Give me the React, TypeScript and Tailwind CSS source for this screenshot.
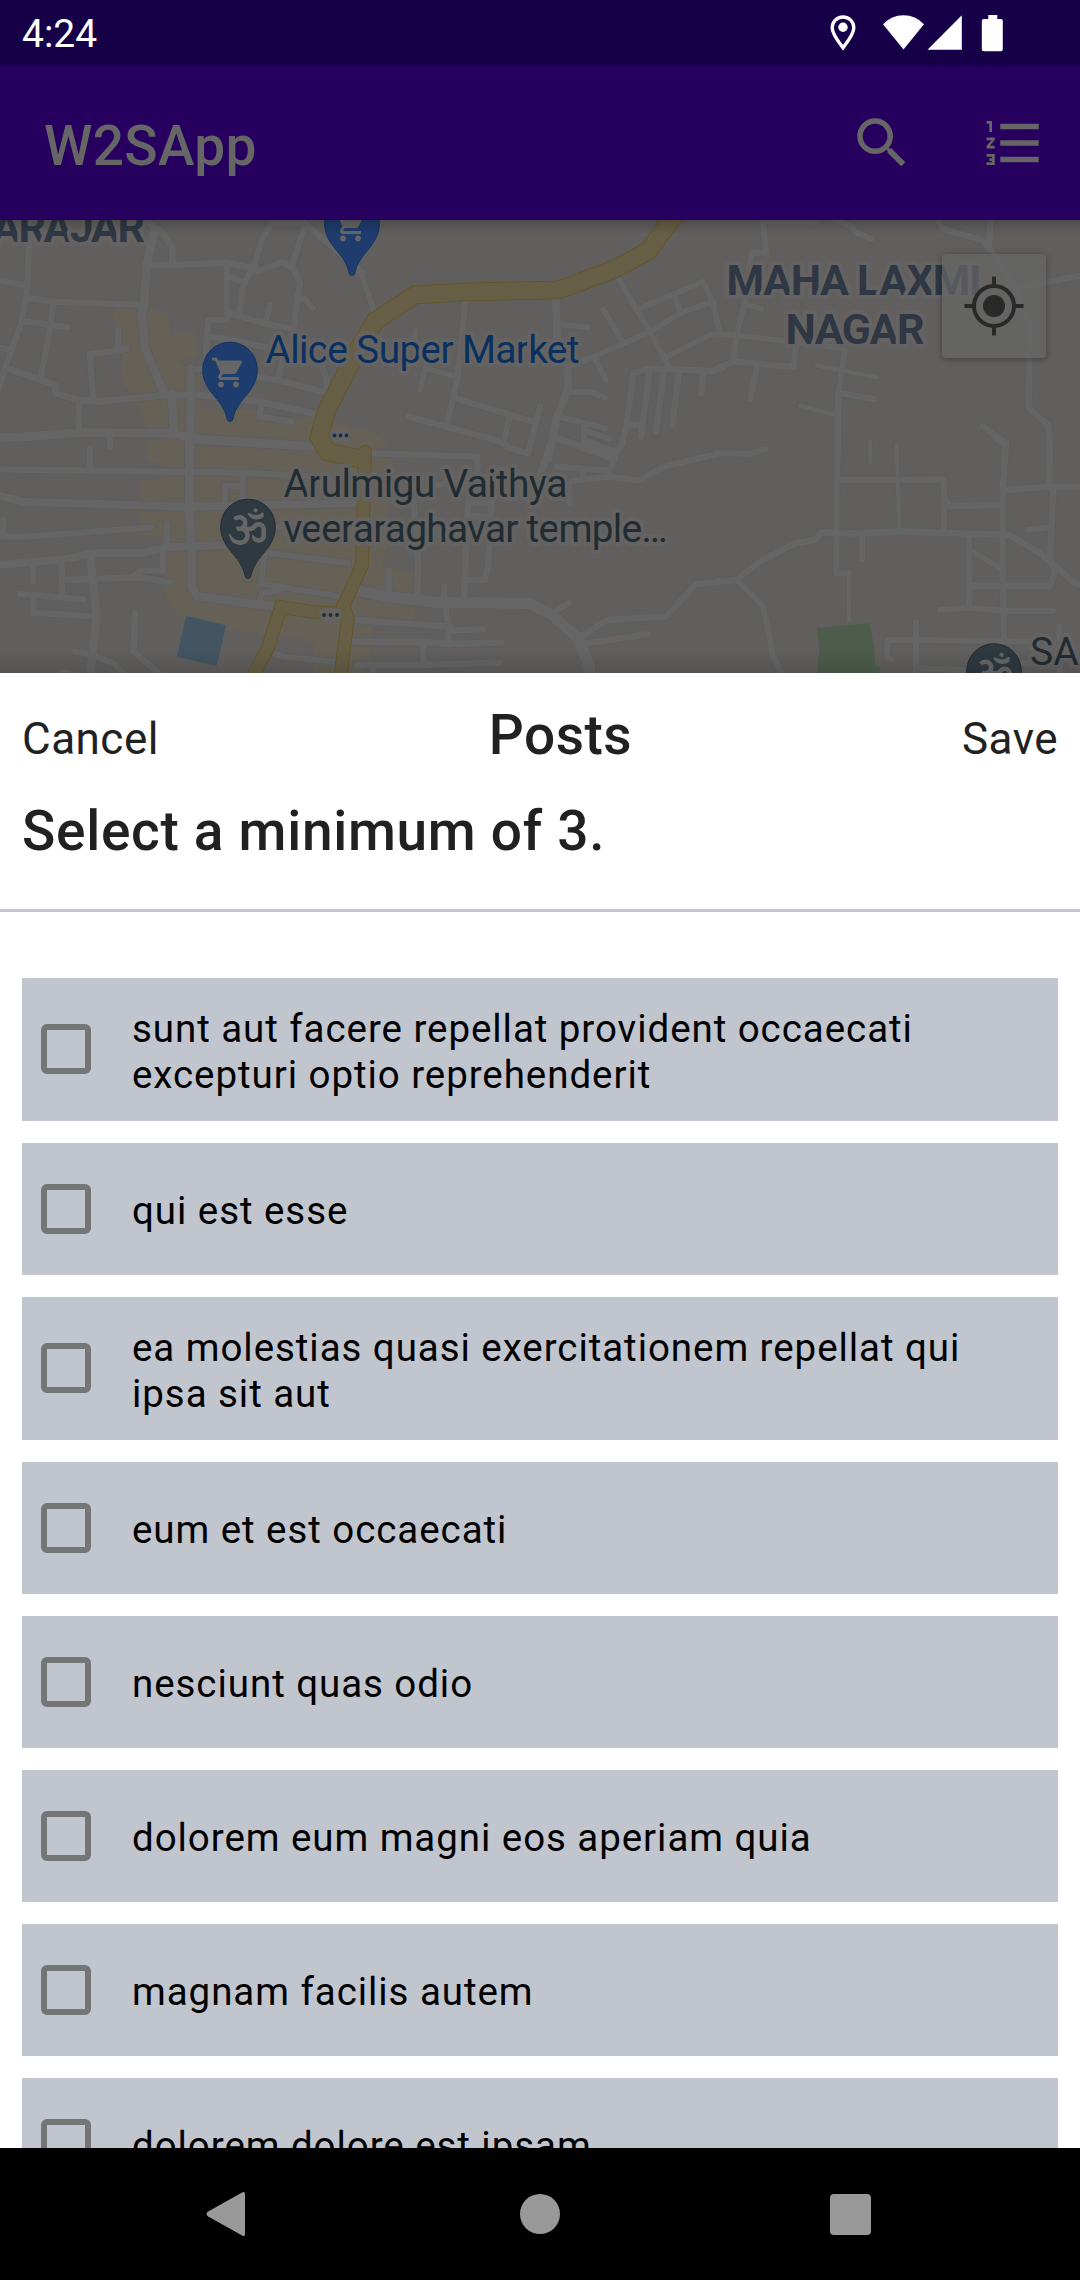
import { FaOm } from "react-icons/fa";
import { MdShoppingCart, MdSearch, MdFormatListNumbered } from "react-icons/md";

type Road = [width: number, d: string];
type Tile = { x: number; y: number; roads: Road[] };

// Street segments, grouped in tiles drawn at a third of their own units.
const tiles: Tile[] = [
  {
    x: 0,
    y: 215,
    roads: [
      [19, "M88 85L80 240L62 330L22 440L-10 540M-10 195L80 212M80 248L160 260L430 270M66 318L205 337M160 262L150 340L124 480M-10 396L30 404"],
      [20, "M20 460L166 510V535L235 555L290 560L500 540L600 540L780 560L960 600"],
      [19, "M355 345V400M380 402L270 418L280 555M238 560L236 650M330 660V695M270 700V770"],
      [26, "M465 40L440 150L432 270L425 300L435 400L490 530M515 535L522 655"],
      [20, "M435 150H520L680 143L780 165M440 20L480 45L517 95V150"],
      [19, "M905 25L815 22L785 75L760 160L730 205L718 300M680 150V298M680 180L735 205M770 170L845 142L880 160L900 205L880 340M915 30L875 155"],
      [19, "M915 25L1090 175M890 245L915 252L938 280M690 295L790 325L880 342M810 272L797 320M690 298L675 315H625L618 400V470M620 365L700 375L850 410"],
      [19, "M610 460L575 465M845 440L835 490M770 485L850 500L990 535M960 440L980 490L978 530M785 560L778 605L875 620"],
      [26, "M572 460L570 730"],
      [26, "M-10 668L80 665L250 652L520 655L570 670L940 695"],
    ],
  },
  {
    x: 360,
    y: 215,
    roads: [
      [17, "M-10 165L8 185L42 290M168 345L158 400M195 460L180 525M195 460L290 485"],
      [19, "M315 260L305 380L292 490L262 625"],
      [24, "M588 250L592 370L622 440L625 520L590 610L565 730"],
      [18, "M590 328L685 337M775 190L830 285L870 350L930 460M730 283L790 385M640 450L700 425L870 350L965 292L1060 260M835 282L1030 200L1058 260L1075 340M945 245L962 292M705 430L738 495M920 425L1050 360L1090 358"],
      [19, "M1090 458L1060 468L870 460L820 475L800 630L785 690L765 710M870 460L843 665M912 465L888 650M957 470L937 630M1030 475L1023 535M800 630H845"],
      [18, "M630 532L690 530L735 548M595 605L735 640M590 670L765 735M672 635V680L770 715M685 650L750 672"],
      [19, "M285 550L520 620M540 575L505 715L440 695L425 680L145 605M450 605L430 680"],
    ],
  },
  {
    x: 720,
    y: 215,
    roads: [
      [18, "M128 10L138 113H95L75 260L50 360L38 440M125 18L290 20M345 15L395 35L405 50L455 72"],
      [19, "M650 10L670 42L785 75L820 115L880 210L930 330L926 580L985 630L990 735M812 10L807 90M1090 180L895 218"],
      [17, "M75 268L125 282M-10 310L0 350M-10 355L200 378L375 402L355 540"],
      [20, "M355 535L352 740"],
      [19, "M230 385L220 455L40 440L-10 460M110 455L92 552M365 535L463 552M787 633L858 685L850 740"],
      [13, "M290 452L470 487M240 572L345 600M450 680V735M530 690V735"],
    ],
  },
  {
    x: 0,
    y: 440,
    roads: [
      [19, "M-10 88L280 92L720 98L1060 115M270 25V90M10 240V290H80L455 262"],
      [26, "M568 -10V220L575 330V440L590 468L820 500"],
      [24, "M590 0L950 20M-10 165L70 185L560 200L660 198L1060 190M-10 375L190 358L280 340L430 338L500 322L680 315"],
      [19, "M500 250V320M490 330L488 392H420L395 412M98 375V425M185 370V460M60 462L250 478M100 465V518L290 530M190 420L420 412L510 427"],
      [25, "M272 350L290 530L268 720"],
      [19, "M405 520L400 635L490 710M225 635L280 645L340 670L380 710M185 695L250 710M728 95V190M675 190V138H728"],
      [18, "M800 338L1045 370M795 340L782 430L840 440L1010 468M840 450L785 460L778 490M820 640L850 650L1005 665M1060 450L1090 455M1050 540H1090M1045 605H1090M830 260H890"],
    ],
  },
  {
    x: 360,
    y: 440,
    roads: [
      [19, "M20 55L40 40L352 50V90M215 140L255 130M160 180L175 370L172 465"],
      [20, "M325 180L315 400L312 480M330 188H395L385 370L375 420H312M330 230H390"],
      [34, "M-10 450L80 470L240 488L505 490L570 520L655 595L688 680V720"],
      [19, "M86 390V460M253 438V490M255 490L265 560V610M-10 540L270 560M265 572L368 567M-10 606H190L265 612L425 608M190 610V670M-10 675H190L420 668M38 680V710M585 515L625 490"],
      [19, "M655 595L740 540L918 530L1008 432L1090 425M680 610L865 582"],
      [18, "M375 -10L430 10L450 25L505 40L515 -10M600 -5L765 55M670 -5L760 35M790 10L765 45L748 95"],
      [22, "M575 0L540 110"],
      [19, "M590 80L745 92M668 90V105M630 125L690 115L750 110L835 122L910 80L1090 38M625 130L628 190"],
    ],
  },
  {
    x: 720,
    y: 440,
    roads: [
      [18, "M-10 38L85 42L135 28M352 -10L349 400H386"],
      [20, "M-10 425L50 420L115 368L225 310L285 300L302 277L400 280L560 275L870 285L960 340L1065 430L1090 435"],
      [18, "M50 420L130 500L160 650L190 710"],
      [12, "M386 395L387 540M450 5L452 70M530 15L538 270"],
      [19, "M355 120L670 118L674 180L671 270M672 175L690 198L840 195M830 -5L858 15L848 150V390L852 600M855 150L985 140H1090M988 -10V140L1000 150L990 350L1005 395L990 438H755"],
      [18, "M922 270L990 262M427 285V358M747 280L748 500M750 330L850 390M660 510L750 503L850 513H1000M588 545V710M515 660L502 650V600H590L940 605M1018 560V600M590 685L740 690M900 670H1020V700"],
    ],
  },
];

const highways: Road[] = [
  [17, "M680 208L648 251L617 268L578 283L557 290L463 292L415 295L375 321L355 355L326 412L319 438L328 452L361 459"],
  [12, "M365 452L362 565L349 594L343 606L348 618L340 680M344 614L313 612L281 607L267 650L245 690"],
];

const PIN =
  "M-27.3 0a27.3 27.3 0 0 1 54.6 0c0 13-7 21-14.5 30C6 38.500 4 44 2.800 49.800c-.8 2.900-4.800 2.900-5.600 0C-4 44-6 38.500-12.800 30-20.300 21-27.300 13-27.300 0z";

function Pin({ x, y, kind }: { x: number; y: number; kind: "shop" | "temple" }) {
  return (
    <g transform={`translate(${x} ${y})`}>
      <path
        d={PIN}
        fill={kind === "shop" ? "#1f3c6e" : "#2e3940"}
        stroke={kind === "shop" ? "#153363" : "#212c33"}
        strokeWidth="1"
      />
      {kind === "shop" ? (
        <MdShoppingCart x={-19.500} y={-15} size={36} color="#666" />
      ) : (
        <FaOm x={-19} y={-18.500} size={37} color="#666" />
      )}
    </g>
  );
}

function Label(props: { x: number; y: number; w?: number; place?: boolean; color: string; children: string }) {
  return (
    <text
      x={props.x}
      y={props.y}
      textLength={props.w}
      fontSize={props.place ? 43 : 39}
      fontWeight={props.place ? 700 : 400}
      fill={props.color}
      stroke="#646362"
      strokeWidth="8"
      strokeLinejoin="round"
      paintOrder="stroke"
    >
      {props.children}
    </text>
  );
}

function CityMap() {
  const layer = (color: string, extra: number) =>
    tiles.map((t) => (
      <g key={`${t.x}-${t.y}`} transform={`translate(${t.x} ${t.y}) scale(.33333)`} stroke={color}>
        {t.roads.map(([w, d]) => (
          <path key={d} d={d} strokeWidth={w + extra} />
        ))}
      </g>
    ));
  return (
    <svg viewBox="0 220 1080 453" className="block h-full w-full">
      <defs>
        <linearGradient id="barShade" x1="0" y1="0" x2="0" y2="1">
          <stop offset="0" stopColor="#000" stopOpacity=".2" />
          <stop offset="1" stopColor="#000" stopOpacity="0" />
        </linearGradient>
        <linearGradient id="sheetShade" x1="0" y1="1" x2="0" y2="0">
          <stop offset="0" stopColor="#000" stopOpacity=".12" />
          <stop offset="1" stopColor="#000" stopOpacity="0" />
        </linearGradient>
      </defs>
      <rect y="220" width="1080" height="453" fill="#605f5d" />
      <g fill="#656157">
        <path
          transform="translate(0 215) scale(.33333)"
          d="M355 243l30 13h-30zM342 280L445 278L505 295L515 360L580 348L597 420L530 435L545 455L600 460V580L760 585L820 610H950L1090 640V740H442V660L430 600L410 560L395 535L370 510L365 420L345 330Z"
        />
        <path
          transform="translate(0 440) scale(.33333)"
          d="M442 -10V40L485 52V120H417V285L485 290L495 340L490 440Q505 520 570 545L680 570L800 580L940 610L945 660L940 720H1090V-10Z"
        />
        <path transform="translate(360 440) scale(.33333)" d="M0 -35Q60 -25 80 20L95 60L85 200L80 320L65 385L160 395L165 540L35 560L30 670L0 670Z" />
      </g>
      <path transform="translate(0 440) scale(.33333)" fill="#605f5d" d="M800 575L880 590L943 612V665L930 720H760Z" />
      <path transform="translate(0 440) scale(.33333)" fill="#435563" d="M558 527L678 556L650 678L531 650Z" />
      <path transform="translate(720 440) scale(.33333)" fill="#4d5c4d" d="M290 564L449 550L462 620L466 680L480 682V710H290L298 630Z" />
      <g fill="none" strokeLinecap="round" strokeLinejoin="round">
        {layer("#5b5e5f", 4.500)}
        {layer("#656565", 0)}
        {highways.map(([w, d]) => (
          <path key={d} d={d} stroke="#665323" strokeWidth={w + 1.6} strokeLinejoin="miter" />
        ))}
        {highways.map(([w, d]) => (
          <path key={d} d={d} stroke="#665f45" strokeWidth={w} strokeLinejoin="miter" />
        ))}
      </g>
      <g fill="#646362">
        <rect x="330" y="429" width="21" height="13" rx="6" />
        <rect x="319" y="608" width="23" height="13" rx="6" />
      </g>
      <g fill="#0c305c">
        <circle cx="334.500" cy="435.500" r="1.900" />
        <circle cx="340.500" cy="435.500" r="1.900" />
        <circle cx="346.500" cy="435.500" r="1.900" />
      </g>
      <g fill="#202c32">
        <circle cx="324" cy="615" r="1.900" />
        <circle cx="330.500" cy="615" r="1.900" />
        <circle cx="337" cy="615" r="1.900" />
      </g>
      <Label x={-8} y={241.5} w={153} place color="#2e3743">ARAJAR</Label>
      <Label x={726.5} y={295} w={255} place color="#2e3743">MAHA LAXMI</Label>
      <Label x={785.5} y={344} w={139} place color="#2e3743">NAGAR</Label>
      <Label x={265.500} y={362.500} w={314} color="#0a3060">Alice Super Market</Label>
      <Label x={283.500} y={497} w={284} color="#202c32">Arulmigu Vaithya</Label>
      <Label x={283.500} y={541.5} w={384} color="#202c32">veeraraghavar temple…</Label>
      <Label x={1030} y={664.5} color="#202c32">SA</Label>
      <Pin x={352} y={223.5} kind="shop" />
      <Pin x={230} y={369.5} kind="shop" />
      <Pin x={248} y={526.500} kind="temple" />
      <Pin x={994} y={671} kind="temple" />
      <rect y="220" width="1080" height="14" fill="url(#barShade)" />
      <rect y="649" width="1080" height="24" fill="url(#sheetShade)" />
    </svg>
  );
}

function StatusBar() {
  return (
    <div className="flex h-[66px] shrink-0 items-center justify-between bg-[#160048] pl-[22px] text-white">
      <span className="pt-[3px] text-[39px] leading-none">4:24</span>
      <svg viewBox="820 0 260 66" className="h-[66px] w-[260px]" fill="currentColor">
        <path
          d="M843 17c-6.200 0-10.800 4.700-10.800 10.800 0 6.500 6.300 14 10.800 20 4.500-6 10.800-13.500 10.800-20C853.800 21.700 849.200 17 843 17z"
          fill="none"
          stroke="currentColor"
          strokeWidth="3.400"
        />
        <circle cx="843" cy="27.300" r="4.700" />
        <path d="M903.500 49.500L883 24.300Q891.500 15.300 903.500 15.300T924 24.300Z" />
        <path d="M961.800 15.300V49.700H927.500Z" />
        <path d="M988.300 15h9v4h3.500q2 0 2 2v28.200q0 2-2 2h-17q-2 0-2-2V21q0-2 2-2h4.500z" />
      </svg>
    </div>
  );
}

function AppBar() {
  return (
    <header className="flex h-[154px] shrink-0 items-center bg-[#27005f] pr-[33px] pl-11 text-[#666666]">
      <h1 className="flex-1 pt-1.5 text-[55px] leading-none font-medium tracking-[0.3px]">W2SApp</h1>
      <MdSearch className="mr-[66px] size-[66px]" />
      <MdFormatListNumbered className="size-[66px]" />
    </header>
  );
}

function LocateButton() {
  return (
    <button className="absolute top-[34px] right-[34px] flex size-[104px] items-center justify-center rounded-[4px] bg-[#666666]/75 shadow-[0_1px_6px_rgba(0,0,0,0.35)]">
      <svg viewBox="-30 -30 60 60" className="size-[60px]" fill="none" stroke="#292929" strokeWidth="4">
        <circle r="20" />
        <circle r="11" fill="#292929" stroke="none" />
        <path d="M0-29.500V-20M0 29.500V20M-29.500 0H-20M29.500 0H20" />
      </svg>
    </button>
  );
}

const posts = [
  "sunt aut facere repellat provident occaecati excepturi optio reprehenderit",
  "qui est esse",
  "ea molestias quasi exercitationem repellat qui ipsa sit aut",
  "eum et est occaecati",
  "nesciunt quas odio",
  "dolorem eum magni eos aperiam quia",
  "magnam facilis autem",
  "dolorem dolore est ipsam",
];

function PostRow({ title }: { title: string }) {
  return (
    <li className="flex min-h-[132px] shrink-0 items-center bg-[#c1c5ce] py-[25.5px] pr-11 pl-[19px]">
      <span className="mb-px size-[50px] shrink-0 rounded-[6px] border-6 border-[#757575]" />
      <span className="relative top-0.5 ml-[41px] text-[38.5px] leading-[46px] tracking-[0.94px] text-black">{title}</span>
    </li>
  );
}

function PostsSheet() {
  return (
    <section className="flex min-h-0 flex-1 flex-col overflow-hidden bg-white text-[#212121]">
      <div className="flex h-[239px] shrink-0 flex-col border-b-[3px] border-[#c1c5d0] px-[22px] pt-[30px]">
        <div className="flex items-baseline justify-between leading-[64px]">
          <span className="text-[44px] tracking-[0.5px]">Cancel</span>
          <h2 className="text-[55px] font-medium tracking-[0.5px]">Posts</h2>
          <span className="text-[44px] tracking-[0.5px]">Save</span>
        </div>
        <p className="mt-7 text-[55px] leading-[64px] font-medium tracking-[0.7px]">Select a minimum of 3.</p>
      </div>
      <ul className="mt-[66px] flex flex-col gap-[22px] px-[22px]">
        {posts.map((p) => (
          <PostRow key={p} title={p} />
        ))}
      </ul>
    </section>
  );
}

function NavBar() {
  return (
    <nav className="flex h-[132px] shrink-0 items-center justify-between bg-black pr-[209px] pl-[206px] text-[#999999]">
      <svg viewBox="0 0 40 46" className="h-[46px] w-10" fill="currentColor">
        <path d="M36.500 1.200L2.200 20.500q-3.400 2.500 0 5L36.500 44.800Q39 45.800 39 43V3Q39 .2 36.500 1.200z" />
      </svg>
      <span className="ml-[3px] size-10 rounded-full bg-current" />
      <span className="size-[41px] rounded-[4px] bg-current" />
    </nav>
  );
}

export default function App() {
  return (
    <div className="flex h-[2280px] w-[1080px] flex-col overflow-hidden font-['Roboto',sans-serif]">
      <StatusBar />
      <AppBar />
      <div className="relative h-[453px] shrink-0">
        <CityMap />
        <LocateButton />
      </div>
      <PostsSheet />
      <NavBar />
    </div>
  );
}
